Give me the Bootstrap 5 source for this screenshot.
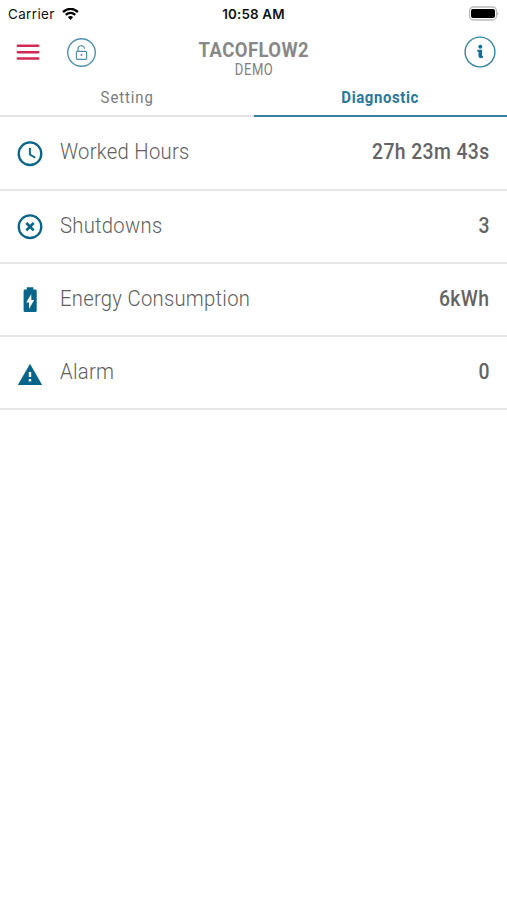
<!DOCTYPE html>
<html lang="en">
<head>
<meta charset="utf-8">
<meta name="viewport" content="width=device-width, initial-scale=1">
<title>TACOFLOW2</title>
<link href="https://cdn.jsdelivr.net/npm/bootstrap@5.3.0/dist/css/bootstrap.min.css" rel="stylesheet">
<style>
body{font-family:Roboto,"Liberation Sans",sans-serif;background:#fff;color:#777;overflow:hidden}
svg{display:block;flex:none}
.status{height:28px;font-family:Inter,"Liberation Sans",sans-serif;font-size:13.4px;color:#111;line-height:28px}
.status>div{flex:1 1 0}
.carrier{letter-spacing:.4px}
.wifi{margin-left:7px}
.clock{font-weight:600;letter-spacing:.15px}
.appbar{height:54px}
.side{width:100px;height:48px}
.lock{margin-left:26px}
.info{padding-right:11px}
.title{line-height:20px;font-size:21px;font-weight:700;color:#888;padding:12px 0 0 1px;letter-spacing:.5px}
.subtitle{line-height:20px;font-size:16.3px;color:#808080;letter-spacing:.7px;padding-left:2px}
.subtitle .fit{transform:scaleX(.8)}
.fit{display:inline-block;white-space:nowrap;transform:scaleX(.88);transform-origin:center}
.fit-start{transform-origin:left}
.fit-end{transform-origin:right}
.tabs{height:35px}
.tabs .nav-link{padding:0;height:35px;line-height:31px;font-size:17px;letter-spacing:1px;color:#7b7b7b;border-bottom:2.5px solid #e4e4e4}
.tabs .nav-link.active{color:#2b789a;font-weight:700;letter-spacing:.7px;border-color:#38809f}
.entry{height:73.2px;padding:0 17.5px 2px 17px;border-bottom:2px solid #e6e6e6}
.entry:first-child{height:73.6px}
.entry svg{margin-right:16.5px;margin-top:4px}
.entry-name{font-size:22px;font-weight:300;color:#606060;letter-spacing:.3px;transform:scaleX(.92)}
.entry-value{font-size:22px;font-weight:500;color:#646464;letter-spacing:.45px}
</style>
</head>
<body>
<div class="status d-flex px-2">
  <div class="carrier d-flex align-items-center">Carrier
    <svg class="wifi" width="17" height="13" viewBox="0 0 17 13" fill="none" stroke="#000" stroke-width="2.3"><path d="M1 4Q8.500-2.300 16 4M3.700 6.900Q8.500 2.800 13.300 6.900"/><path d="M5.900 9.100Q8.500 6.900 11.100 9.100L8.500 11.900Z" fill="#000" stroke="none"/></svg>
  </div>
  <div class="clock text-center">10:58 AM</div>
  <div class="d-flex justify-content-end align-items-center">
    <svg width="32" height="16" viewBox="0 0 32 16"><rect x="2.500" y="1" width="27" height="13" rx="4" fill="#fff" stroke="#bbb" stroke-width="1.300"/><rect x="4" y="3" width="24" height="9" rx="2" fill="#000"/><path d="M30.500 5.500q1.300 2 0 4z" fill="#888"/></svg>
  </div>
</div>
<header class="appbar d-flex justify-content-between">
  <div class="side d-flex align-items-center ps-3">
    <svg width="24" height="18" viewBox="0 0 24 18" stroke="#d12b55" stroke-width="2.4" stroke-linecap="round"><path d="M1.800 2.800h20.500M1.800 9.200h20.500M1.800 15.500h20.500"/></svg>
    <svg class="lock" width="31" height="31" viewBox="0 0 31 31" fill="none" stroke="#4d91b0"><circle cx="15.500" cy="15.500" r="13.800" stroke-width="1.400"/><rect x="10.400" y="14.300" width="10.200" height="8" rx="1" stroke-width="1.200"/><path d="M12 14v-2.200a3.300 3.300 0 0 1 6.400-.9v.9" stroke-width="1.200"/><circle cx="15.500" cy="18" r="1" fill="#4d91b0" stroke="none"/></svg>
  </div>
  <div class="text-center">
    <div class="title"><span class="fit">TACOFLOW2</span></div>
    <div class="subtitle"><span class="fit">DEMO</span></div>
  </div>
  <div class="side info d-flex align-items-center justify-content-end">
    <svg width="32" height="32" viewBox="0 0 32 32"><circle cx="16" cy="16" r="14.900" fill="#fff" stroke="#3584a6" stroke-width="1.400"/><circle cx="16.300" cy="10.800" r="2" fill="#176d93"/><path d="M13.300 13.800h4.800v5.900q0 .6 1 .2v1.600q-4.600 1.800-4.600-1.500v-4.200h-1.200z" fill="#176d93"/></svg>
  </div>
</header>
<nav class="tabs nav nav-fill flex-nowrap">
  <a class="nav-link w-50" href="#"><span class="fit">Setting</span></a>
  <a class="nav-link active w-50" href="#"><span class="fit">Diagnostic</span></a>
</nav>
<main>
  <div class="entry d-flex align-items-center">
    <svg width="26" height="26" viewBox="0 0 26 26" fill="none" stroke="#086489" stroke-width="2.3"><circle cx="13" cy="12.700" r="11.300"/><path d="M12.900 7v6.500l5.400 3.200" stroke-width="1.900"/></svg>
    <span class="entry-name fit fit-start">Worked Hours</span><span class="entry-value fit fit-end ms-auto">27h 23m 43s</span>
  </div>
  <div class="entry d-flex align-items-center">
    <svg width="26" height="26" viewBox="0 0 26 26" fill="none" stroke="#086489" stroke-width="2.3"><circle cx="13" cy="12.700" r="11.300"/><path d="M9.300 9l7.400 7.400M16.700 9l-7.400 7.400" stroke-width="2.600"/></svg>
    <span class="entry-name fit fit-start">Shutdowns</span><span class="entry-value fit fit-end ms-auto">3</span>
  </div>
  <div class="entry d-flex align-items-center">
    <svg width="26" height="26" viewBox="0 0 26 26"><path fill="#086489" d="M9.800 2.500V.3h6.500v2.200h2q1.400 0 1.400 1.400v19.800q0 1.400-1.400 1.400H8q-1.400 0-1.400-1.400V3.900Q6.600 2.500 8 2.500z"/><path fill="#fff" d="M14.300 7v6h2.900L12 22v-6.500H9.200z"/></svg>
    <span class="entry-name fit fit-start">Energy Consumption</span><span class="entry-value fit fit-end ms-auto">6kWh</span>
  </div>
  <div class="entry d-flex align-items-center">
    <svg width="26" height="26" viewBox="0 0 26 26"><path fill="#086489" d="M13 2.700L25.200 23.900H.8z"/><path fill="#fff" d="M11.800 11h2.400v5h-2.400zM11.800 18.100h2.400v2.400h-2.400z"/></svg>
    <span class="entry-name fit fit-start">Alarm</span><span class="entry-value fit fit-end ms-auto">0</span>
  </div>
</main>
<script src="https://cdn.jsdelivr.net/npm/bootstrap@5.3.0/dist/js/bootstrap.bundle.min.js"></script>
</body>
</html>
